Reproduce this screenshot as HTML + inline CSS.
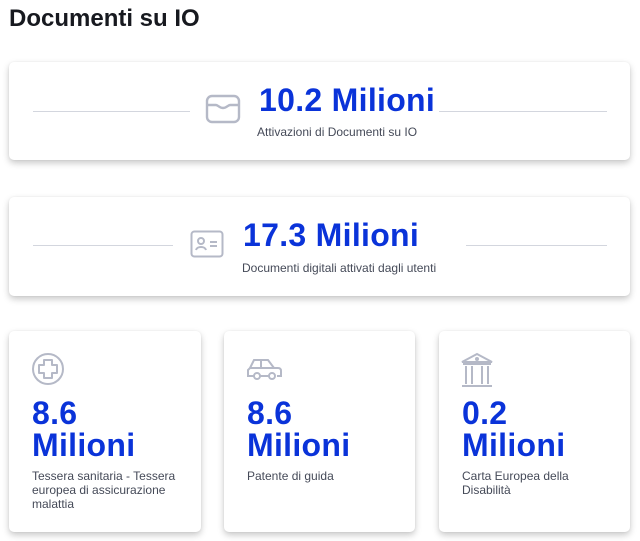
<!DOCTYPE html>
<html><head><meta charset="utf-8"><style>
*{margin:0;padding:0;box-sizing:border-box}
body{width:640px;height:541px;background:#fff;font-family:"Liberation Sans",sans-serif;overflow:hidden;position:relative}
h1{position:absolute;left:9px;top:5px;font-size:24px;font-weight:bold;color:#17191f;letter-spacing:0px}
.card{position:absolute;background:#fff;border-radius:5px;box-shadow:0 3px 7px rgba(0,0,0,.22),0 0 2px rgba(0,0,0,.06)}
.line{position:absolute;height:1px;background:#d3d6de}
.big{position:absolute;color:#0a33d9;font-weight:bold;font-size:32px;white-space:nowrap;letter-spacing:0.3px}
.sub{position:absolute;color:#454a58;font-size:12px;white-space:nowrap}
.num{position:absolute;left:23px;top:66px;color:#0a33d9;font-weight:bold;font-size:32px;line-height:32px;letter-spacing:0.3px}
.desc{position:absolute;left:23px;top:138px;color:#454a58;font-size:12px;line-height:14px;width:150px}
.ic{position:absolute}
</style></head><body>
<h1>Documenti su IO</h1>

<div class="card" style="left:9px;top:62px;width:621px;height:98px">
<div class="line" style="left:24px;top:49px;width:157px"></div>
<div class="line" style="left:430px;top:49px;width:168px"></div>
<svg class="ic" style="left:196px;top:32px" width="36" height="30" viewBox="0 0 36 30" fill="none" stroke="#b5b9c7" stroke-width="2.4"><rect x="2" y="2" width="32" height="26" rx="5"/><path d="M2 11h9c2 0 3 3 7 3s5-3 7-3h9"/></svg>
<div class="big" style="left:250px;top:20px">10.2 Milioni</div>
<div class="sub" style="left:248px;top:63px">Attivazioni di Documenti su IO</div>
</div>

<div class="card" style="left:9px;top:197px;width:621px;height:99px">
<div class="line" style="left:24px;top:48px;width:140px"></div>
<div class="line" style="left:457px;top:48px;width:141px"></div>
<svg class="ic" style="left:181px;top:33px" width="34" height="28" viewBox="0 0 34 28" fill="none" stroke="#b5b9c7" stroke-width="2"><rect x="1.5" y="1.5" width="31" height="25" rx="3"/><circle cx="11" cy="11" r="3"/><path d="M6 20c1-4 9-4 10 0M20 12h7M20 16h7"/></svg>
<div class="big" style="left:234px;top:20px">17.3 Milioni</div>
<div class="sub" style="left:233px;top:64px">Documenti digitali attivati dagli utenti</div>
</div>

<div class="card" style="left:9px;top:331px;width:192px;height:201px">
<svg class="ic" style="left:22px;top:21px" width="34" height="34" viewBox="0 0 34 34" fill="none" stroke="#b5b9c7" stroke-width="2"><circle cx="17" cy="17" r="15"/><path d="M13 8h8v5h5v8h-5v5h-8v-5H8v-8h5z" stroke-linejoin="round"/></svg>
<div class="num">8.6<br>Milioni</div>
<div class="desc" style="width:170px">Tessera sanitaria - Tessera europea di assicurazione malattia</div>
</div>

<div class="card" style="left:224px;top:331px;width:191px;height:201px">
<svg class="ic" style="left:22px;top:27px" width="36" height="24" viewBox="0 0 36 24" fill="none" stroke="#b5b9c7" stroke-width="2"><path d="M4 10l4-8h14l6 8h4c2 0 3 1 3 3v5h-4M8 18H2v-6l2-2h24"/><circle cx="11" cy="18" r="3"/><circle cx="26" cy="18" r="3"/><path d="M14 18h9M15 2v8"/></svg>
<div class="num">8.6<br>Milioni</div>
<div class="desc">Patente di guida</div>
</div>

<div class="card" style="left:439px;top:331px;width:191px;height:201px">
<svg class="ic" style="left:21px;top:21px" width="34" height="36" viewBox="0 0 34 36" fill="none" stroke="#b5b9c7" stroke-width="2"><path d="M2 10L17 2l15 8zM3 12h28M6 14v18M12 14v18M22 14v18M28 14v18M2 34h30"/><circle cx="17" cy="7" r="1" fill="#b5b9c7"/></svg>
<div class="num">0.2<br>Milioni</div>
<div class="desc">Carta Europea della Disabilità</div>
</div>
</body></html>
